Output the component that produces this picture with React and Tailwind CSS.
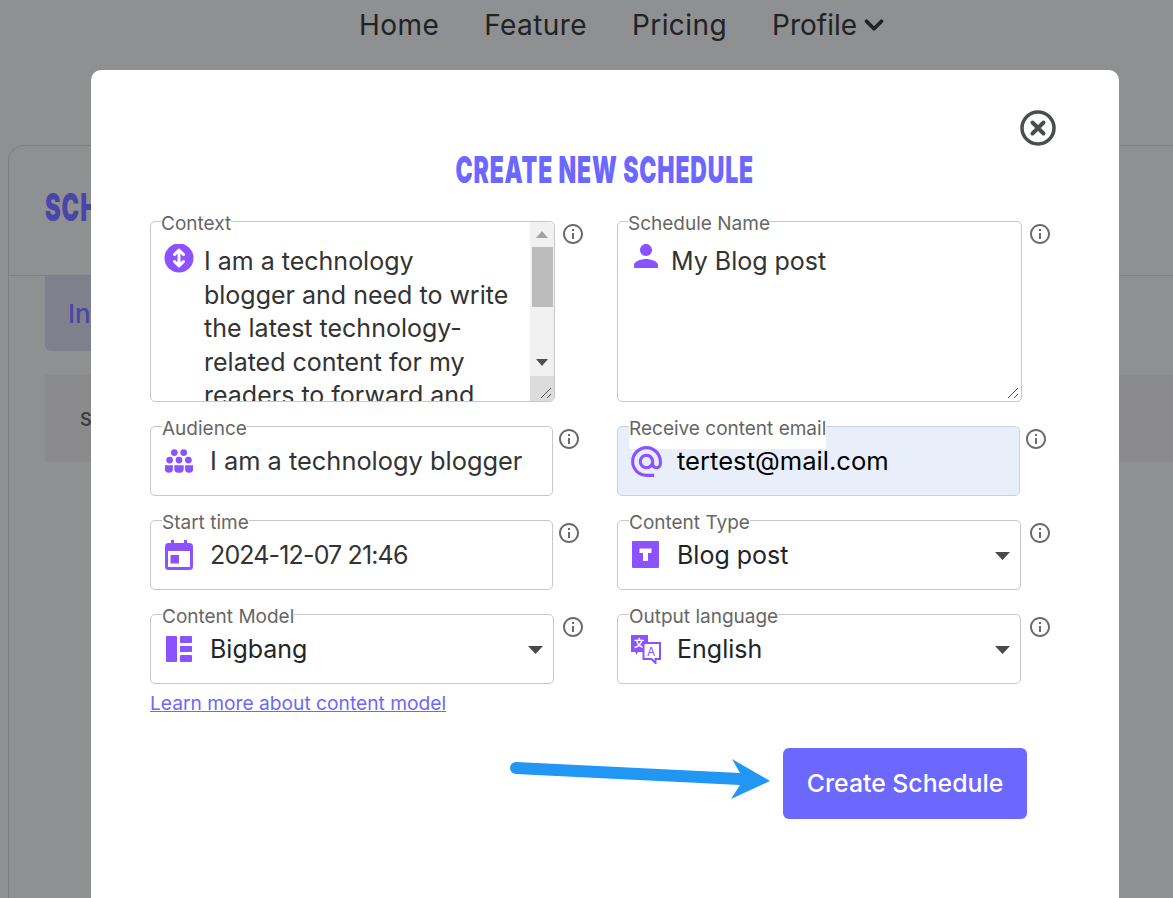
import { ChevronDown } from 'lucide-react';
import { MdAlternateEmail, MdInfoOutline, MdPerson } from 'react-icons/md';

const SwapIcon = () => (
  <svg width="30" height="30" viewBox="0 0 30 30" className="-mt-[5px]">
    <circle cx="15" cy="15" r="14.5" fill="#8c52ff" />
    <path d="M15 7v16M10.5 11.5 15 7l4.500 4.500M10.500 18.500 15 23l4.500-4.500" fill="none" stroke="#fff" strokeWidth="3" strokeLinecap="round" strokeLinejoin="round" />
  </svg>
);

const GroupIcon = () => (
  <svg width="32" height="26" viewBox="0 0 32 26" fill="#8c52ff">
    <circle cx="11" cy="4" r="3.600" />
    <circle cx="21" cy="4" r="3.600" />
    <circle cx="6" cy="12" r="3.600" />
    <circle cx="16" cy="12" r="3.600" />
    <circle cx="26" cy="12" r="3.600" />
    <path d="M1 17.500h8.500v4a4 4 0 0 1-4 4H5a4 4 0 0 1-4-4zM11 17.500h10v4a4 4 0 0 1-4 4h-2a4 4 0 0 1-4-4zM22.500 17.500H31v4a4 4 0 0 1-4 4h-.5a4 4 0 0 1-4-4z" />
  </svg>
);

const CalendarIcon = () => (
  <svg width="28" height="30" viewBox="0 0 28 30" fill="#8c52ff">
    <rect x="1.500" y="4.500" width="25" height="24" rx="2" fill="none" stroke="#8c52ff" strokeWidth="3" />
    <rect x="1.500" y="4.500" width="25" height="6.500" />
    <rect x="6" y="0" width="3" height="6" />
    <rect x="19" y="0" width="3" height="6" />
    <rect x="5.500" y="15" width="8.500" height="8.500" />
  </svg>
);

const TypeIcon = () => (
  <svg width="28" height="28" viewBox="0 0 28 28">
    <rect width="27" height="27" fill="#8c52ff" rx="1" />
    <path d="M7.500 7.500h12v4.500h-3.500v8h-5v-8H7.500z" fill="#fff" />
  </svg>
);

const LayoutIcon = () => (
  <svg width="28" height="28" viewBox="0 0 28 28" fill="#8c52ff">
    <rect x="1" y="1" width="11" height="26" rx="1" />
    <rect x="15" y="1" width="12" height="7" rx="1" />
    <rect x="15" y="11" width="12" height="6" />
    <rect x="15" y="20" width="12" height="7" rx="1" />
  </svg>
);

const TranslateIcon = () => (
  <svg width="30" height="30" viewBox="0 0 30 30">
    <path d="M0 1h17v17H7l-2 3-.5-3H0z" fill="#8c52ff" />
    <text x="3" y="13" fontSize="10" fontWeight="700" fill="#fff" fontFamily="'Noto Sans CJK SC', sans-serif">文</text>
    <path d="M12.500 9h16.500v16h-4.500v4l-4-4h-8z" fill="#fff" stroke="#8c52ff" strokeWidth="2" />
    <text x="16" y="22" fontSize="12" fill="#8c52ff" fontFamily="Inter, sans-serif">A</text>
  </svg>
);

const GripLines = () => (
  <svg width="12" height="12" viewBox="0 0 12 12" className="absolute right-[2px] bottom-[2px]" stroke="#555" strokeWidth="1">
    <path d="M1 11 11 1M7 11l4-4" />
  </svg>
);

const CaretDown = () => (
  <svg width="15" height="8" viewBox="0 0 15 8" className="absolute right-[10px] top-[31px]">
    <path d="M0 0h15L7.500 8z" fill="#4a4a4a" />
  </svg>
);

const FieldLabel = ({ children, top = '-top-[17px]' }) => (
  <span className={`absolute left-[11px] h-10 bg-[linear-gradient(transparent_42%,white_42%)] text-[19px] leading-10 text-[#666] ${top}`}>
    {children}
  </span>
);

function Field({ label, icon, children, width, infoGap, highlight, select, textClass = 'mt-[2px] text-[25px] text-[#333]' }) {
  return (
    <div className="flex items-start">
      <div className={`relative flex h-[70px] items-center rounded-[5px] border border-[#c8c8c8] pl-[13px] ${width} ${highlight ? 'bg-[#e8effb] border-[#ccd0da]' : ''}`}>
        <FieldLabel top="-top-[18px]">{label}</FieldLabel>
        <span className="relative flex h-[30px] w-[30px] items-center justify-center">{icon}</span>
        <span className={`relative ml-4 ${textClass}`}>{children}</span>
        {select && <CaretDown />}
      </div>
      <MdInfoOutline className={`mt-[1px] text-[24px] text-[#6b6b6b] ${infoGap}`} />
    </div>
  );
}

function TextBlock({ label, icon, width, children, scrollbar }) {
  return (
    <div className="flex items-start">
      <div className={`relative ${width}`}>
        <div className="relative flex h-[181px] items-start overflow-hidden rounded-[5px] border border-[#c8c8c8] pl-[13px] pt-[23px]">
          <span className="relative flex h-[30px] w-[30px] items-center justify-center">{icon}</span>
          <div className="relative ml-[10px] text-[25px] leading-[33.500px] text-[#333]">{children}</div>
          {scrollbar && (
            <div className="absolute right-0 top-0 flex h-full w-[24px] flex-col bg-[#f1f1f1]">
              <div className="flex h-[25px] items-center justify-center">
                <svg width="12" height="7" viewBox="0 0 12 7"><path d="M0 7h12L6 0z" fill="#a3a3a3" /></svg>
              </div>
              <div className="mx-auto h-[60px] w-[21px] bg-[#bcbcbc]" />
              <div className="flex h-[69px] items-end justify-center pb-[10px]">
                <svg width="12" height="7" viewBox="0 0 12 7"><path d="M0 0h12L6 7z" fill="#505050" /></svg>
              </div>
              <div className="flex-1 bg-[#dcdcdc]" />
            </div>
          )}
          <GripLines />
        </div>
        <FieldLabel>{label}</FieldLabel>
      </div>
      <MdInfoOutline className="ml-[6px] mt-[1px] text-[24px] text-[#6b6b6b]" />
    </div>
  );
}

export default function App() {
  return (
    <div className="relative h-[898px] overflow-hidden bg-[#8f9092] font-['Inter',sans-serif]">
      {/* page behind the dialog */}
      <nav className="flex h-[145px] items-start gap-[45px] pl-[359px] pt-[6px] text-[28px] leading-[38px] tracking-[0.015em] text-[#222]">
        <span>Home</span>
        <span>Feature</span>
        <span>Pricing</span>
        <span className="flex items-center gap-[2px] tracking-normal">
          Profile
          <ChevronDown size={30} strokeWidth={3} />
        </span>
      </nav>
      <div className="ml-2 h-[753px] rounded-tl-2xl border-l border-t border-[#7e7f81]">
        <div className="h-[130px] border-b border-[#7e7f81] pl-9 pt-[39px] text-[38px] font-black leading-[44px] tracking-[1.500px] text-[#4a45a8]">
          <span className="inline-block origin-left scale-x-[.62]">SCH</span>
        </div>
        <div className="ml-9 flex h-[75px] w-[200px] items-center rounded-bl-md bg-[#80808d] pl-[23px] text-[26px] font-medium text-[#4a45a8]">
          In
        </div>
        <div className="ml-9 mt-[24px] flex h-[87px] items-center border-t border-[#898a8c] bg-[#8b8b8e] pl-[35px] text-[18px] font-semibold text-[#3f3f3f]">
          S
        </div>
      </div>

      {/* dialog */}
      <div className="absolute left-[91px] top-[70px] h-[828px] w-[1028px] rounded-t-[10px] bg-white pl-[59px] pt-[40px]">
        <div className="flex justify-end pr-[63px]">
          <svg width="36" height="36" viewBox="0 0 36 36" fill="none" stroke="#4a4d50">
            <circle cx="18" cy="18" r="16" strokeWidth="3.500" />
            <path d="M12.500 12.500l11 11M23.500 12.500l-11 11" strokeWidth="4" strokeLinecap="round" />
          </svg>
        </div>
        <h2 className="mb-[29px] ml-[-59px] mt-[2px] h-[44px] text-center text-[37px] font-black leading-[44px] tracking-[1.400px] text-[#6c67ff]">
          <span className="inline-block scale-x-[.62] whitespace-nowrap">CREATE NEW SCHEDULE</span>
        </h2>

        <div className="grid grid-cols-[467px_1fr] gap-y-6">
          <TextBlock label="Context" icon={<SwapIcon />} width="w-[405px]" scrollbar>
            I am a technology<br />
            blogger and need to write<br />
            the latest technology-<br />
            related content for my<br />
            readers to forward and
          </TextBlock>
          <TextBlock label="Schedule Name" icon={<MdPerson className="-mt-[9px] shrink-0 text-[36px] text-[#8c52ff]" />} width="w-[405px]">
            My Blog post
          </TextBlock>

          <Field label="Audience" icon={<GroupIcon />} width="w-[403px]" infoGap="ml-[4px]" textClass="mt-[1px] text-[25.400px] text-[#333]">
            I am a technology blogger
          </Field>
          <Field label="Receive content email" icon={<MdAlternateEmail className="shrink-0 text-[37px] text-[#8c52ff]" />} width="w-[403px]" infoGap="ml-[4px]" highlight textClass="mt-[1px] text-[25.600px] text-black">
            tertest@mail.com
          </Field>

          <Field label="Start time" icon={<CalendarIcon />} width="w-[403px]" infoGap="ml-[4px]" textClass="mt-[2px] text-[25px] tracking-[-0.85px] text-[#333]">
            2024-12-07 21:46
          </Field>
          <Field label="Content Type" icon={<TypeIcon />} width="w-[404px]" infoGap="ml-[7px]" select textClass="mt-[2px] text-[25px] text-[#212529]">
            Blog post
          </Field>

          <Field label="Content Model" icon={<LayoutIcon />} width="w-[404px]" infoGap="ml-[7px]" select textClass="mt-[2px] text-[25px] text-[#212529]">
            Bigbang
          </Field>
          <Field label="Output language" icon={<TranslateIcon />} width="w-[404px]" infoGap="ml-[7px]" select textClass="mt-[2px] text-[25px] text-[#212529]">
            English
          </Field>
        </div>

        <a className="mt-[6px] block text-[19.200px] leading-[27px] text-[#6c67ff] underline">Learn more about content model</a>

        <div className="mt-[31px] flex pl-[633px]">
          <button className="h-[71px] w-[244px] rounded-md bg-[#6c67ff] text-[24.800px] font-medium text-white">Create Schedule</button>
        </div>
      </div>

      {/* annotation arrow */}
      <svg width="270" height="50" viewBox="0 0 270 50" className="absolute left-[505px] top-[755px]">
        <path d="M11 7 235 18 227 4 265 26 226 44 235 30 11 19A6 6 0 0 1 11 7z" fill="#2196f3" />
      </svg>
    </div>
  );
}
